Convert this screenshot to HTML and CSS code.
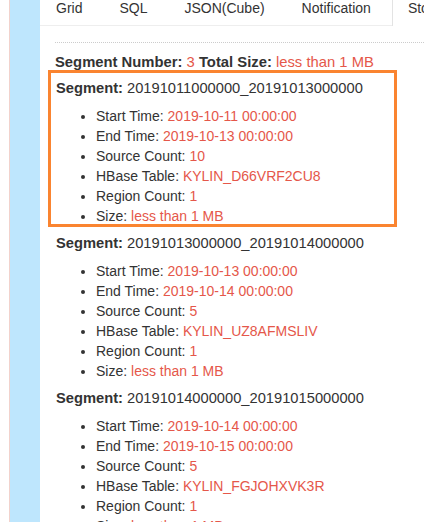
FILE: index.html
```html
<!DOCTYPE html>
<html>
<head>
<meta charset="utf-8">
<link rel="stylesheet" href="styles.css">
</head>
<body>
<div class="gutter"></div>
<aside class="sidebar"></aside>
<main class="main">
  <ul class="tabs">
    <li class="tab">Grid</li>
    <li class="tab">SQL</li>
    <li class="tab">JSON(Cube)</li>
    <li class="tab">Notification</li>
    <li class="tab active">Storage</li>
  </ul>
  <div class="content">
    <div class="summary"><b>Segment Number:</b> <span class="val">3</span> <b>Total Size:</b> <span class="val">less than 1 MB</span></div>

    <div class="segment">
      <span class="annot"></span>
      <div class="seg-head"><b>Segment:</b> 20191011000000_20191013000000</div>
      <ul class="props">
        <li>Start Time: <span class="val">2019-10-11 00:00:00</span></li>
        <li>End Time: <span class="val">2019-10-13 00:00:00</span></li>
        <li>Source Count: <span class="val">10</span></li>
        <li>HBase Table: <span class="val">KYLIN_D66VRF2CU8</span></li>
        <li>Region Count: <span class="val">1</span></li>
        <li>Size: <span class="val">less than 1 MB</span></li>
      </ul>
    </div>

    <div class="segment">
      <div class="seg-head"><b>Segment:</b> 20191013000000_20191014000000</div>
      <ul class="props">
        <li>Start Time: <span class="val">2019-10-13 00:00:00</span></li>
        <li>End Time: <span class="val">2019-10-14 00:00:00</span></li>
        <li>Source Count: <span class="val">5</span></li>
        <li>HBase Table: <span class="val">KYLIN_UZ8AFMSLIV</span></li>
        <li>Region Count: <span class="val">1</span></li>
        <li>Size: <span class="val">less than 1 MB</span></li>
      </ul>
    </div>

    <div class="segment">
      <div class="seg-head"><b>Segment:</b> 20191014000000_20191015000000</div>
      <ul class="props">
        <li>Start Time: <span class="val">2019-10-14 00:00:00</span></li>
        <li>End Time: <span class="val">2019-10-15 00:00:00</span></li>
        <li>Source Count: <span class="val">5</span></li>
        <li>HBase Table: <span class="val">KYLIN_FGJOHXVK3R</span></li>
        <li>Region Count: <span class="val">1</span></li>
        <li>Size: <span class="val">less than 1 MB</span></li>
      </ul>
    </div>
  </div>
</main>
</body>
</html>
```

FILE: styles.css
```css
html, body {
  margin: 0;
  padding: 0;
  height: 100%;
  overflow: hidden;
  background: #fff;
}
body {
  display: flex;
  font-family: "Liberation Sans", Arial, sans-serif;
  color: #333;
}
.gutter {
  width: 9px;
  flex: none;
}
.sidebar {
  width: 30px;
  flex: none;
  background: #bee6fd;
  border-left: 1px solid #f2d2cc;
}
.main {
  flex: 1;
  min-width: 0;
  overflow: hidden;
}
.tabs {
  list-style: none;
  margin: 0;
  padding: 0;
  display: flex;
  white-space: nowrap;
  border-bottom: 1px solid #eee;
  height: 25px;
  font-size: 14px;
}
.tab {
  line-height: 16px;
  padding: 0 18px 0 15px;
  border: 1px solid transparent;
  border-top: 0;
  margin-right: 2px;
  height: 25px;
  color: #333;
}
.tab.active {
  border-color: #e3e3e3;
  background: #fff;
  height: 26px;
  box-sizing: border-box;
  border-bottom: 0;
}
.content {
  padding: 16px 0 0 15px;
}
.summary {
  border-top: 1px dotted #ccc;
  padding-top: 9px;
  font-size: 14.8px;
  line-height: 20px;
  margin-bottom: 6px;
}
.val {
  color: #e5574a;
}
.segment {
  position: relative;
  margin-bottom: 7px;
}
.annot {
  position: absolute;
  left: -7px;
  top: -8px;
  width: 349px;
  height: 157px;
  box-sizing: border-box;
  border: 3px solid #fa8430;
  pointer-events: none;
}
.seg-head {
  font-size: 14.7px;
  line-height: 20px;
  padding-left: 1px;
}
.props {
  margin: 8px 0 0;
  padding-left: 41px;
  font-size: 14px;
  line-height: 20px;
}
```
